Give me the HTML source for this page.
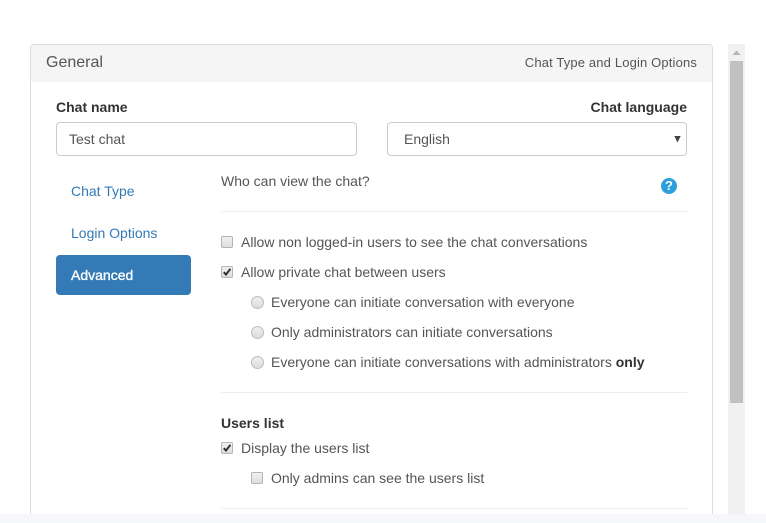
<!DOCTYPE html>
<html><head><meta charset="utf-8">
<style>
html,body{margin:0;padding:0;width:766px;height:523px;overflow:hidden;background:#fff}
body{font-family:"Liberation Sans",Arial,sans-serif;font-size:14px;color:#555;position:relative}
.a{position:absolute;white-space:nowrap;line-height:20px}
.b{font-weight:700;color:#333}
.l{color:#337ab7}
.hr{position:absolute;left:221px;width:466px;height:1px;background:#eee}
.cb{position:absolute;width:10px;height:10px;border:1px solid #b5b5b5;border-radius:2px;background:linear-gradient(#f0f0f0,#dedede)}
.cb svg{position:absolute;left:0;top:0}
.r{position:absolute;width:11px;height:11px;border:1px solid #bdbdbd;border-radius:50%;background:linear-gradient(#f0f0f0,#dcdcdc)}
</style></head><body>
<div style="position:absolute;left:30px;top:44px;width:681px;height:480px;border:1px solid #ddd;border-radius:4px;background:#fff"></div>
<div style="position:absolute;left:31px;top:45px;width:681px;height:37px;background:#f5f5f5;border-radius:3px 3px 0 0"></div>
<div class="a" style="left:46px;top:53px;font-size:16px;color:#555">General</div>
<div class="a" style="right:69px;top:53px;color:#555;font-size:13px;letter-spacing:.15px">Chat Type and Login Options</div>

<div class="a b" style="left:56px;top:97px">Chat name</div>
<div class="a b" style="right:79px;top:97px">Chat language</div>
<div style="position:absolute;left:56px;top:122px;width:299px;height:32px;border:1px solid #ccc;border-radius:4px"></div>
<div class="a" style="left:69px;top:129px;color:#555">Test chat</div>
<div style="position:absolute;left:387px;top:122px;width:298px;height:32px;border:1px solid #ccc;border-radius:4px"></div>
<div class="a" style="left:404px;top:129px;color:#555">English</div>
<svg style="position:absolute;left:674px;top:135px" width="7" height="8"><path d="M0.3 1H6.7L3.5 7.5Z" fill="#444"/></svg>

<div class="a l" style="left:71px;top:181px">Chat Type</div>
<div class="a l" style="left:71px;top:223px">Login Options</div>
<div style="position:absolute;left:56px;top:255px;width:135px;height:40px;background:#337ab7;border-radius:4px"></div>
<div class="a" style="left:71px;top:265px;color:#fff;-webkit-text-stroke:.35px #fff">Advanced</div>

<div class="a" style="left:221px;top:171px">Who can view the chat?</div>
<div style="position:absolute;left:661px;top:178px;width:16px;height:16px;border-radius:50%;background:#2d9fdc;color:#fff;font-weight:700;font-size:13px;line-height:16px;text-align:center">?</div>
<div class="hr" style="top:211px"></div>

<div class="cb" style="left:221px;top:236px"></div>
<div class="a" style="left:241px;top:232px">Allow non logged-in users to see the chat conversations</div>
<div class="cb" style="left:221px;top:266px"><svg width="10" height="10"><path d="M1.8 5.2L4 7.6L8.4 1.8" fill="none" stroke="#333" stroke-width="2"/></svg></div>
<div class="a" style="left:241px;top:262px">Allow private chat between users</div>
<div class="r" style="left:251px;top:296px"></div>
<div class="a" style="left:271px;top:292px">Everyone can initiate conversation with everyone</div>
<div class="r" style="left:251px;top:326px"></div>
<div class="a" style="left:271px;top:322px">Only administrators can initiate conversations</div>
<div class="r" style="left:251px;top:356px"></div>
<div class="a" style="left:271px;top:352px">Everyone can initiate conversations with administrators <b style="color:#333">only</b></div>
<div class="hr" style="top:392px"></div>

<div class="a b" style="left:221px;top:413px">Users list</div>
<div class="cb" style="left:221px;top:442px"><svg width="10" height="10"><path d="M1.8 5.2L4 7.6L8.4 1.8" fill="none" stroke="#333" stroke-width="2"/></svg></div>
<div class="a" style="left:241px;top:438px">Display the users list</div>
<div class="cb" style="left:251px;top:472px"></div>
<div class="a" style="left:271px;top:468px">Only admins can see the users list</div>
<div class="hr" style="top:508px"></div>

<div style="position:absolute;left:728px;top:44px;width:17px;height:479px;background:#f1f1f1"></div>
<svg style="position:absolute;left:732px;top:50px" width="9" height="6"><path d="M0.5 5H8.5L4.5 0.5Z" fill="#b5b5b5"/></svg>
<div style="position:absolute;left:730px;top:61px;width:13px;height:342px;background:#c1c1c1"></div>
<div style="position:absolute;left:0;top:514px;width:766px;height:9px;background:#f5f7fa"></div>
</body></html>
